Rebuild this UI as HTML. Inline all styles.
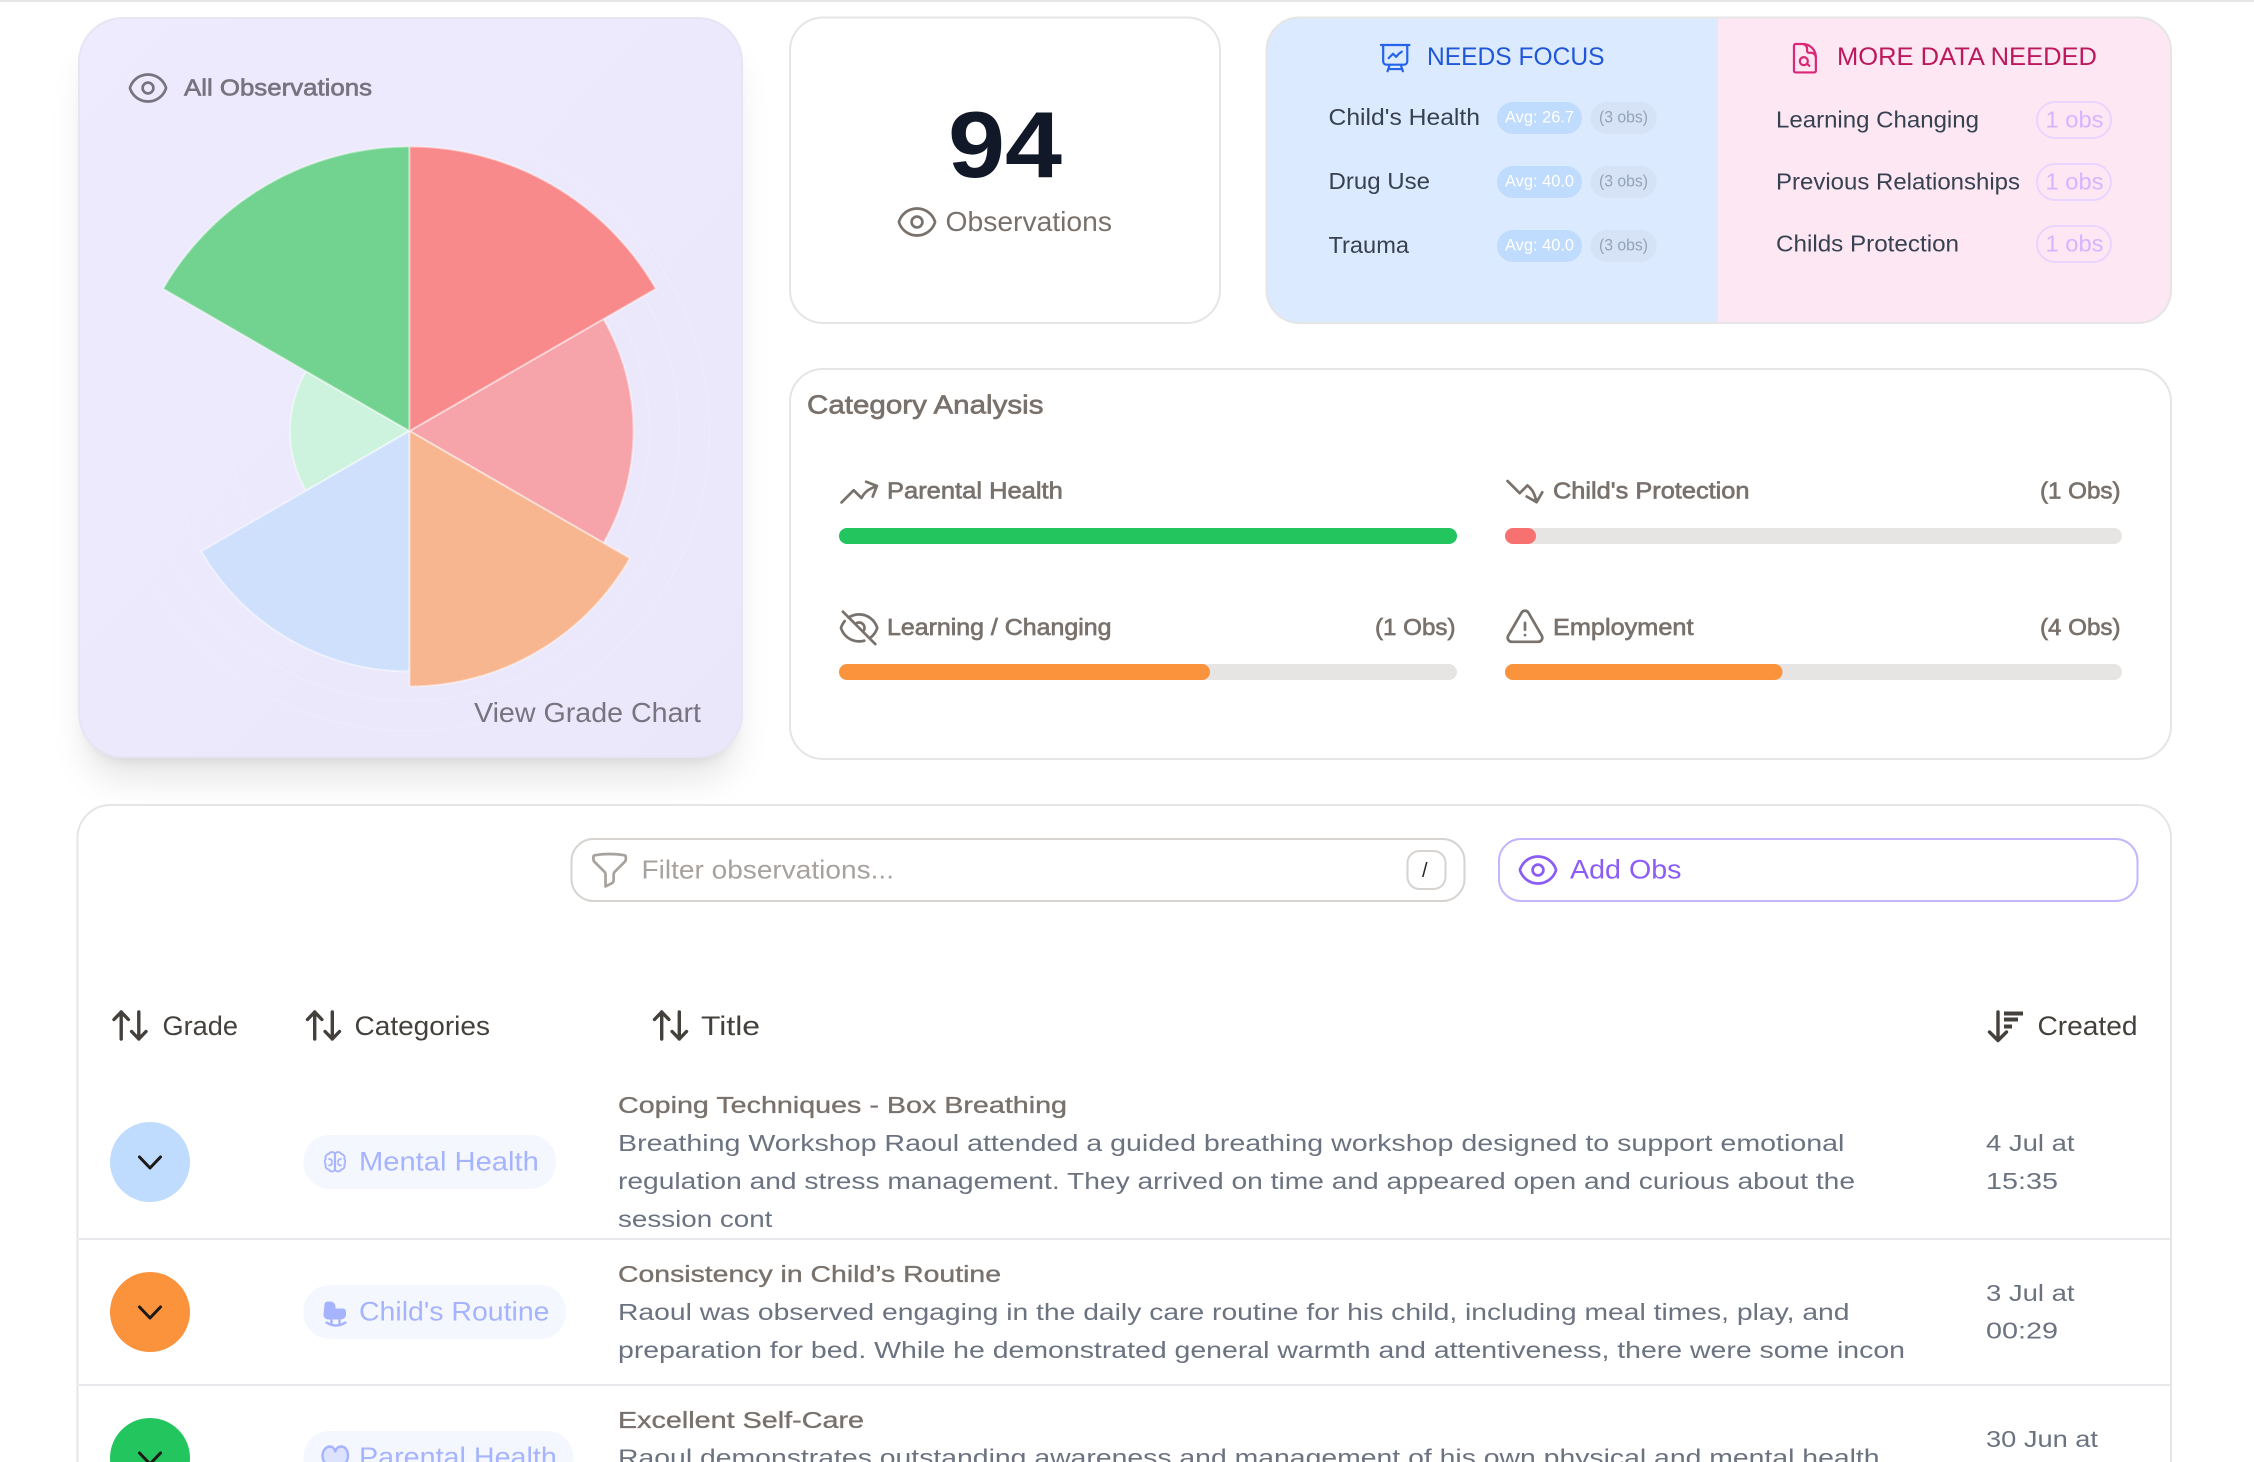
<!DOCTYPE html>
<html lang="en">
<head>
<meta charset="utf-8">
<title>Observations</title>
<style>
html,body{margin:0;padding:0;background:#fff;width:2254px;height:1462px;overflow:hidden}
body{position:relative}
.shadow{position:absolute;left:79px;top:18px;width:663px;height:739px;border-radius:44px;box-shadow:0 29px 36px -7px rgba(0,0,0,.1),0 11px 14px -9px rgba(0,0,0,.1)}
svg.page{position:absolute;left:0;top:0;display:block}
text{font-family:"Liberation Sans",sans-serif;font-size:23px}
.semi{stroke:currentColor;stroke-width:.65px}
.med{stroke:currentColor;stroke-width:.35px}
.ic{fill:none;stroke-linecap:round;stroke-linejoin:round}
</style>
</head>
<body>
<div class="shadow"></div>
<svg class="page" xmlns="http://www.w3.org/2000/svg" width="2254" height="1462" viewBox="0 0 2254 1462">
<defs>
<linearGradient id="lav" x1="0" y1="0" x2="1" y2="1"><stop offset="0" stop-color="#efebfe"/><stop offset="1" stop-color="#ebe7fb"/></linearGradient>
<clipPath id="splitClip"><rect x="1266.500" y="18" width="904.500" height="304.500" rx="33"/></clipPath>
<clipPath id="frame"><rect x="0" y="0" width="2254" height="1462"/></clipPath>
<path id="eye" d="M2.036 12.322a1.012 1.012 0 0 1 0-.639C3.423 7.51 7.36 4.5 12 4.5c4.638 0 8.573 3.007 9.963 7.178.07.207.07.431 0 .639C20.577 16.49 16.64 19.5 12 19.5c-4.638 0-8.573-3.007-9.963-7.178ZM15 12a3 3 0 1 1-6 0 3 3 0 0 1 6 0Z"/>
<g id="sort"><path d="M8.700 1.500v27M1.500 9 8.700 1.500 15.900 9M26.300 1.500v27M19.100 21 26.300 28.500 33.500 21"/></g>
<path id="chev" d="M-10.500-5 0 6 10.500-5"/>
</defs>

<rect x="0" y="0" width="2254" height="2" fill="#e5e5e5"/>

<!-- Polar chart card -->
<rect x="79" y="18" width="663" height="739" rx="44" fill="url(#lav)" stroke="#e7e4f4" stroke-width="2"/>
<use href="#eye" transform="translate(126.400 66.400) scale(1.800)" class="ic" stroke="#78737f" stroke-width="1.500"/>
<text x="184" y="95.500" textLength="188" lengthAdjust="spacingAndGlyphs" fill="#78737f" class="semi" style="color:#78737f">All Observations</text>
<g transform="translate(409.500 431)">
<g fill="none" stroke="#efebfe" stroke-width="1"><circle r="300"/><circle r="270"/><circle r="240"/><circle r="210"/><circle r="180"/></g>
<g stroke="#ffffff" stroke-opacity=".45" stroke-width="2" stroke-linejoin="round">
<path d="M0 0L-103.500 59.750A119.500 119.500 0 0 1-103.500-59.750Z" fill="#cdf3df"/>
<path d="M0 0L0 240.500A240.500 240.500 0 0 1-208.300 120.250Z" fill="#cfe0fd"/>
<path d="M0 0L194-112A224 224 0 0 1 194 112Z" fill="#f7a3aa"/>
<path d="M0 0L220.500 127.300A254.700 254.700 0 0 1 0 255.500Z" fill="#f7b690"/>
<path d="M0 0L-246.400-142.250A284.500 284.500 0 0 1 0-284.500Z" fill="#72d28f"/>
<path d="M0 0L0-284.500A284.500 284.500 0 0 1 246.400-142.250Z" fill="#f98a8c"/>
</g>
</g>
<text x="474" y="722" textLength="227" lengthAdjust="spacingAndGlyphs" fill="#78737f" style="font-size:28px">View Grade Chart</text>

<!-- 94 card -->
<rect x="790" y="17.500" width="430" height="305.500" rx="33" fill="#fff" stroke="#e5e5e5" stroke-width="2"/>
<text x="948" y="177" textLength="114" lengthAdjust="spacingAndGlyphs" fill="#111827" style="font-size:94px;font-weight:700">94</text>
<use href="#eye" transform="translate(895.400 200.400) scale(1.800)" class="ic" stroke="#78716c" stroke-width="1.500"/>
<text x="945.500" y="231" textLength="166.500" lengthAdjust="spacingAndGlyphs" fill="#78716c" style="font-size:28px">Observations</text>

<!-- Needs focus / more data -->
<g clip-path="url(#splitClip)">
<rect x="1265" y="17" width="453" height="306" fill="#dbeafe"/>
<rect x="1718" y="17" width="454" height="306" fill="#fce7f3"/>
</g>
<rect x="1266.500" y="17.500" width="904.500" height="305.500" rx="33" fill="none" stroke="#e5e5e5" stroke-width="2"/>
<path transform="translate(1377.700 40.600) scale(1.460)" class="ic" stroke="#2563eb" stroke-width="1.500" d="M3.750 3v11.250A2.250 2.250 0 0 0 6 16.500h2.250M3.750 3h-1.500m1.500 0h16.500m0 0h1.500m-1.500 0v11.250A2.250 2.250 0 0 1 18 16.500h-2.250m-7.500 0h7.500m-7.500 0-1 3m8.500-3 1 3m0 0 .5 1.500m-.5-1.500h-9.500m0 0-.5 1.500m.75-9 3-3 2.148 2.148A12.061 12.061 0 0 1 16.500 7.605"/>
<text x="1427" y="65" textLength="177.500" lengthAdjust="spacingAndGlyphs" fill="#2056d8" style="font-size:25px">NEEDS FOCUS</text>
<path transform="translate(1787.400 40.700) scale(1.460)" class="ic" stroke="#db2777" stroke-width="1.500" d="M19.500 14.250v-2.625a3.375 3.375 0 0 0-3.375-3.375h-1.500A1.125 1.125 0 0 1 13.500 7.125v-1.500a3.375 3.375 0 0 0-3.375-3.375H8.250M10.500 2.250H5.625c-.621 0-1.125.504-1.125 1.125v17.250c0 .621.504 1.125 1.125 1.125h12.750c.621 0 1.125-.504 1.125-1.125V11.250a9 9 0 0 0-9-9ZM13.481 15.731 15 17.250M14 14a2.750 2.750 0 1 1-5.500 0 2.750 2.750 0 0 1 5.500 0Z"/>
<text x="1837" y="65" textLength="260" lengthAdjust="spacingAndGlyphs" fill="#be185d" style="font-size:25px">MORE DATA NEEDED</text>

<g fill="#374151">
<text x="1328.500" y="125" textLength="151.500" lengthAdjust="spacingAndGlyphs">Child's Health</text>
<text x="1328.500" y="189" textLength="101.500" lengthAdjust="spacingAndGlyphs">Drug Use</text>
<text x="1328.500" y="253" textLength="80.500" lengthAdjust="spacingAndGlyphs">Trauma</text>
<text x="1776" y="127.500" textLength="203" lengthAdjust="spacingAndGlyphs">Learning Changing</text>
<text x="1776" y="189.500" textLength="244" lengthAdjust="spacingAndGlyphs">Previous Relationships</text>
<text x="1776" y="251.500" textLength="183" lengthAdjust="spacingAndGlyphs">Childs Protection</text>
</g>
<g fill="#bfdbfe"><rect x="1497" y="102" width="85" height="32" rx="16"/><rect x="1497" y="166" width="85" height="32" rx="16"/><rect x="1497" y="230" width="85" height="32" rx="16"/></g>
<g fill="#d6e2f6"><rect x="1590.500" y="102" width="66" height="32" rx="16"/><rect x="1590.500" y="166" width="66" height="32" rx="16"/><rect x="1590.500" y="230" width="66" height="32" rx="16"/></g>
<g fill="#ffffff">
<text x="1505" y="122.500" textLength="69" lengthAdjust="spacingAndGlyphs" style="font-size:17px">Avg: 26.7</text>
<text x="1505" y="186.500" textLength="69" lengthAdjust="spacingAndGlyphs" style="font-size:17px">Avg: 40.0</text>
<text x="1505" y="250.500" textLength="69" lengthAdjust="spacingAndGlyphs" style="font-size:17px">Avg: 40.0</text>
</g>
<g fill="#94a3b8">
<text x="1599" y="122.500" textLength="49" lengthAdjust="spacingAndGlyphs" style="font-size:17px">(3 obs)</text>
<text x="1599" y="186.500" textLength="49" lengthAdjust="spacingAndGlyphs" style="font-size:17px">(3 obs)</text>
<text x="1599" y="250.500" textLength="49" lengthAdjust="spacingAndGlyphs" style="font-size:17px">(3 obs)</text>
</g>
<g fill="none" stroke="#e9d5ff" stroke-width="2"><rect x="2037" y="102" width="74" height="36" rx="18"/><rect x="2037" y="164" width="74" height="36" rx="18"/><rect x="2037" y="226" width="74" height="36" rx="18"/></g>
<g fill="#d8b4fe">
<text x="2045.500" y="127.500" textLength="58" lengthAdjust="spacingAndGlyphs">1 obs</text>
<text x="2045.500" y="189.500" textLength="58" lengthAdjust="spacingAndGlyphs">1 obs</text>
<text x="2045.500" y="251.500" textLength="58" lengthAdjust="spacingAndGlyphs">1 obs</text>
</g>

<!-- Category Analysis -->
<rect x="790" y="369" width="1381" height="390" rx="33" fill="#fff" stroke="#e5e5e5" stroke-width="2"/>
<text x="807" y="413.300" textLength="236.500" lengthAdjust="spacingAndGlyphs" fill="#78716c" class="semi" style="font-size:26px;color:#78716c">Category Analysis</text>

<path transform="translate(837.500 470) scale(1.800)" class="ic" stroke="#78716c" stroke-width="1.500" d="M2.250 18 9 11.250l4.306 4.306a11.950 11.950 0 0 1 5.814-5.518l2.740-1.220m0 0-5.940-2.281m5.940 2.280-2.280 5.941"/>
<path transform="translate(837.500 606.300) scale(1.800)" class="ic" stroke="#78716c" stroke-width="1.500" d="M3.980 8.223A10.477 10.477 0 0 0 1.934 12C3.226 16.338 7.244 19.500 12 19.500c.993 0 1.953-.138 2.863-.395M6.228 6.228A10.451 10.451 0 0 1 12 4.500c4.756 0 8.773 3.162 10.065 7.498a10.522 10.522 0 0 1-4.293 5.774M6.228 6.228 3 3m3.228 3.228 3.650 3.650m7.894 7.894L21 21m-3.228-3.228-3.650-3.650m0 0a3 3 0 1 0-4.243-4.243m4.242 4.242L9.880 9.880"/>
<path transform="translate(1503.500 470.200) scale(1.800)" class="ic" stroke="#78716c" stroke-width="1.500" d="M2.250 6 9 12.750l4.286-4.286a11.948 11.948 0 0 1 4.306 6.430l.776 2.898m0 0 3.182-5.511m-3.182 5.510-5.511-3.181"/>
<path transform="translate(1503.400 606.700) scale(1.800)" class="ic" stroke="#78716c" stroke-width="1.500" d="M12 9v3.750m-9.303 3.376c-.866 1.500.217 3.374 1.948 3.374h14.710c1.730 0 2.813-1.874 1.948-3.374L13.949 3.378c-.866-1.500-3.032-1.500-3.898 0L2.697 16.126ZM12 15.750h.007v.008H12v-.008Z"/>

<g fill="#78716c" style="color:#78716c">
<text class="semi" x="887" y="498.700" textLength="175.800" lengthAdjust="spacingAndGlyphs">Parental Health</text>
<text class="semi" x="887" y="635" textLength="224.500" lengthAdjust="spacingAndGlyphs">Learning / Changing</text>
<text class="semi" x="1375" y="635" textLength="80.500" lengthAdjust="spacingAndGlyphs">(1 Obs)</text>
<text class="semi" x="1553" y="498.700" textLength="196.500" lengthAdjust="spacingAndGlyphs">Child's Protection</text>
<text class="semi" x="2040" y="498.700" textLength="80.500" lengthAdjust="spacingAndGlyphs">(1 Obs)</text>
<text class="semi" x="1553" y="635" textLength="140.500" lengthAdjust="spacingAndGlyphs">Employment</text>
<text class="semi" x="2040" y="635" textLength="80.500" lengthAdjust="spacingAndGlyphs">(4 Obs)</text>
</g>
<g fill="#e7e5e4"><rect x="839" y="528" width="618" height="16" rx="8"/><rect x="839" y="664" width="618" height="16" rx="8"/><rect x="1505" y="528" width="617" height="16" rx="8"/><rect x="1505" y="664" width="617" height="16" rx="8"/></g>
<rect x="839" y="528" width="618" height="16" rx="8" fill="#22c55e"/>
<rect x="839" y="664" width="371" height="16" rx="8" fill="#fb923c"/>
<rect x="1505" y="528" width="31" height="16" rx="8" fill="#f87171"/>
<rect x="1505" y="664" width="277.500" height="16" rx="8" fill="#fb923c"/>

<!-- Table card -->
<path d="M77.500 1464V838a33 33 0 0 1 33-33H2138a33 33 0 0 1 33 33V1464" fill="#fff" stroke="#e5e5e5" stroke-width="2"/>
<rect x="571.500" y="839" width="893" height="62" rx="22" fill="#fff" stroke="#d6d3d1" stroke-width="2"/>
<path transform="translate(588 848.600) scale(1.800)" class="ic" stroke="#a8a29e" stroke-width="1.500" d="M12 3c2.755 0 5.455.232 8.083.678.533.09.917.556.917 1.096v1.044a2.250 2.250 0 0 1-.659 1.591l-5.432 5.432a2.250 2.250 0 0 0-.659 1.591v2.927a2.250 2.250 0 0 1-1.244 2.013L9.750 21v-6.568a2.250 2.250 0 0 0-.659-1.591L3.659 7.409A2.250 2.250 0 0 1 3 5.818V4.774c0-.54.384-1.006.917-1.096A48.320 48.320 0 0 1 12 3Z"/>
<text x="641.500" y="878.300" textLength="252.500" lengthAdjust="spacingAndGlyphs" fill="#a8a29e" style="font-size:26px">Filter observations...</text>
<rect x="1407.500" y="851" width="38" height="38" rx="12" fill="#fff" stroke="#d6d3d1" stroke-width="2"/>
<text x="1422" y="877" fill="#292524" style="font-size:20px">/</text>
<rect x="1499" y="839" width="638.500" height="62" rx="22" fill="#fff" stroke="#c4b5fd" stroke-width="2"/>
<use href="#eye" transform="translate(1516.400 848.400) scale(1.800)" class="ic" stroke="#8b5cf6" stroke-width="1.500"/>
<text x="1570" y="878.500" textLength="111.500" lengthAdjust="spacingAndGlyphs" fill="#8b5cf6" style="font-size:27px">Add Obs</text>

<!-- Header -->
<g class="ic" stroke="#44403c" stroke-width="3.400">
<use href="#sort" x="112.500" y="1010.500"/>
<use href="#sort" x="306" y="1010.500"/>
<use href="#sort" x="653" y="1010.500"/>
<path d="M1998 1012v28M1989.500 1032l8.500 8.500 8.500-8.500"/>
</g>
<g stroke="#44403c" stroke-width="4" stroke-linecap="butt"><path d="M2004 1013.500h19M2004 1019.500h14M2004 1026.500h8"/></g>
<g fill="#44403c">
<text x="162.500" y="1035" textLength="75.500" lengthAdjust="spacingAndGlyphs" style="font-size:27px">Grade</text>
<text x="354.500" y="1035" textLength="135.500" lengthAdjust="spacingAndGlyphs" style="font-size:27px">Categories</text>
<text x="701" y="1035" textLength="59" lengthAdjust="spacingAndGlyphs" style="font-size:27px">Title</text>
<text x="2037.500" y="1035" textLength="100" lengthAdjust="spacingAndGlyphs" style="font-size:27px">Created</text>
</g>

<!-- Rows -->
<g clip-path="url(#frame)">
<rect x="79" y="1238" width="2091" height="2" fill="#e7e7ec"/>
<rect x="79" y="1384" width="2091" height="2" fill="#e7e7ec"/>

<circle cx="150" cy="1162" r="40" fill="#bfdbfe"/>
<use href="#chev" x="150" y="1162" class="ic" stroke="#1c1917" stroke-width="3"/>
<circle cx="150" cy="1312" r="40" fill="#fb923c"/>
<use href="#chev" x="150" y="1312" class="ic" stroke="#1c1917" stroke-width="3"/>
<circle cx="150" cy="1458" r="40" fill="#22c55e"/>
<use href="#chev" x="150" y="1458" class="ic" stroke="#1c1917" stroke-width="3"/>

<rect x="303.500" y="1135" width="252.500" height="54" rx="26" fill="#f5f7ff"/>
<g class="ic" stroke="#a5b4fc" stroke-width="1.800">
<path d="M334.800 1153.500a3.500 3.500 0 0 0-6 .5a3.500 3.500 0 0 0-3 5a4 4 0 0 0 0 5.500a3.500 3.500 0 0 0 3 5a3.500 3.500 0 0 0 6 .5Z"/>
<path d="M335.200 1153.500a3.500 3.500 0 0 1 6 .5a3.500 3.500 0 0 1 3 5a4 4 0 0 1 0 5.500a3.500 3.500 0 0 1-3 5a3.500 3.500 0 0 1-6 .5Z"/>
<path d="M329 1159c1.800 0 3 1 3 2.800M341 1159c-1.800 0-3 1-3 2.800M329 1165.500c1.500 0 2.500-.7 3-2M341 1165.500c-1.500 0-2.500-.7-3-2"/>
</g>
<text x="359" y="1170.700" textLength="179.800" lengthAdjust="spacingAndGlyphs" fill="#a5b4fc" style="font-size:27px">Mental Health</text>

<rect x="303.500" y="1285" width="262.500" height="54" rx="26" fill="#f5f7ff"/>
<path fill="#a5b4fc" d="M324.500 1304.500a3 3 0 0 1 3-3h3a5 5 0 0 1 5 5v2h7.500a3 3 0 0 1 3 3v3a5 5 0 0 1-5 5h-13a4.500 4.500 0 0 1-4.500-4.500Z"/>
<path fill="none" stroke="#a5b4fc" stroke-width="2.400" stroke-linecap="round" d="M326.500 1322.500c6 4 13 4 19 0M331.500 1320v4.500M339.500 1320v4.500"/>
<text x="359" y="1320.700" textLength="190.500" lengthAdjust="spacingAndGlyphs" fill="#a5b4fc" style="font-size:27px">Child's Routine</text>

<rect x="303.500" y="1431" width="270" height="54" rx="26" fill="#f5f7ff"/>
<path fill="#dde3ff" stroke="#a5b4fc" stroke-width="2.400" stroke-linejoin="round" d="M335.300 1473C329 1468 322.500 1463 322.500 1456C322.500 1450 326.500 1446.500 330 1446.500C332.500 1446.500 334.300 1448 335.300 1451.500C336.300 1448 338 1446.500 341 1446.500C345 1446.500 348 1450 348 1456C348 1463 341 1468 335.300 1473Z"/>
<text x="359" y="1466" textLength="197.800" lengthAdjust="spacingAndGlyphs" fill="#a5b4fc" style="font-size:27px">Parental Health</text>

<g fill="#78716c" style="color:#78716c">
<text class="med" x="618" y="1112.800" textLength="449" lengthAdjust="spacingAndGlyphs" style="font-size:23.500px">Coping Techniques - Box Breathing</text>
<text class="med" x="618" y="1281.800" textLength="383" lengthAdjust="spacingAndGlyphs" style="font-size:23.500px">Consistency in Child’s Routine</text>
<text class="med" x="618" y="1427.800" textLength="246" lengthAdjust="spacingAndGlyphs" style="font-size:23.500px">Excellent Self-Care</text>
</g>
<g fill="#6b7280">
<text x="618" y="1151" textLength="1226.400" lengthAdjust="spacingAndGlyphs">Breathing Workshop Raoul attended a guided breathing workshop designed to support emotional</text>
<text x="618" y="1189" textLength="1237" lengthAdjust="spacingAndGlyphs">regulation and stress management. They arrived on time and appeared open and curious about the</text>
<text x="618" y="1227" textLength="154.400" lengthAdjust="spacingAndGlyphs">session cont</text>
<text x="618" y="1320" textLength="1231.500" lengthAdjust="spacingAndGlyphs">Raoul was observed engaging in the daily care routine for his child, including meal times, play, and</text>
<text x="618" y="1358" textLength="1287" lengthAdjust="spacingAndGlyphs">preparation for bed. While he demonstrated general warmth and attentiveness, there were some incon</text>
<text x="618" y="1465.300" textLength="1261.600" lengthAdjust="spacingAndGlyphs">Raoul demonstrates outstanding awareness and management of his own physical and mental health</text>
<text x="1986" y="1151" textLength="88.500" lengthAdjust="spacingAndGlyphs">4 Jul at</text>
<text x="1986" y="1189" textLength="72" lengthAdjust="spacingAndGlyphs">15:35</text>
<text x="1986" y="1301" textLength="88.500" lengthAdjust="spacingAndGlyphs">3 Jul at</text>
<text x="1986" y="1338.500" textLength="72" lengthAdjust="spacingAndGlyphs">00:29</text>
<text x="1986" y="1447" textLength="112" lengthAdjust="spacingAndGlyphs">30 Jun at</text>
</g>
</g>
</svg>
</body>
</html>
